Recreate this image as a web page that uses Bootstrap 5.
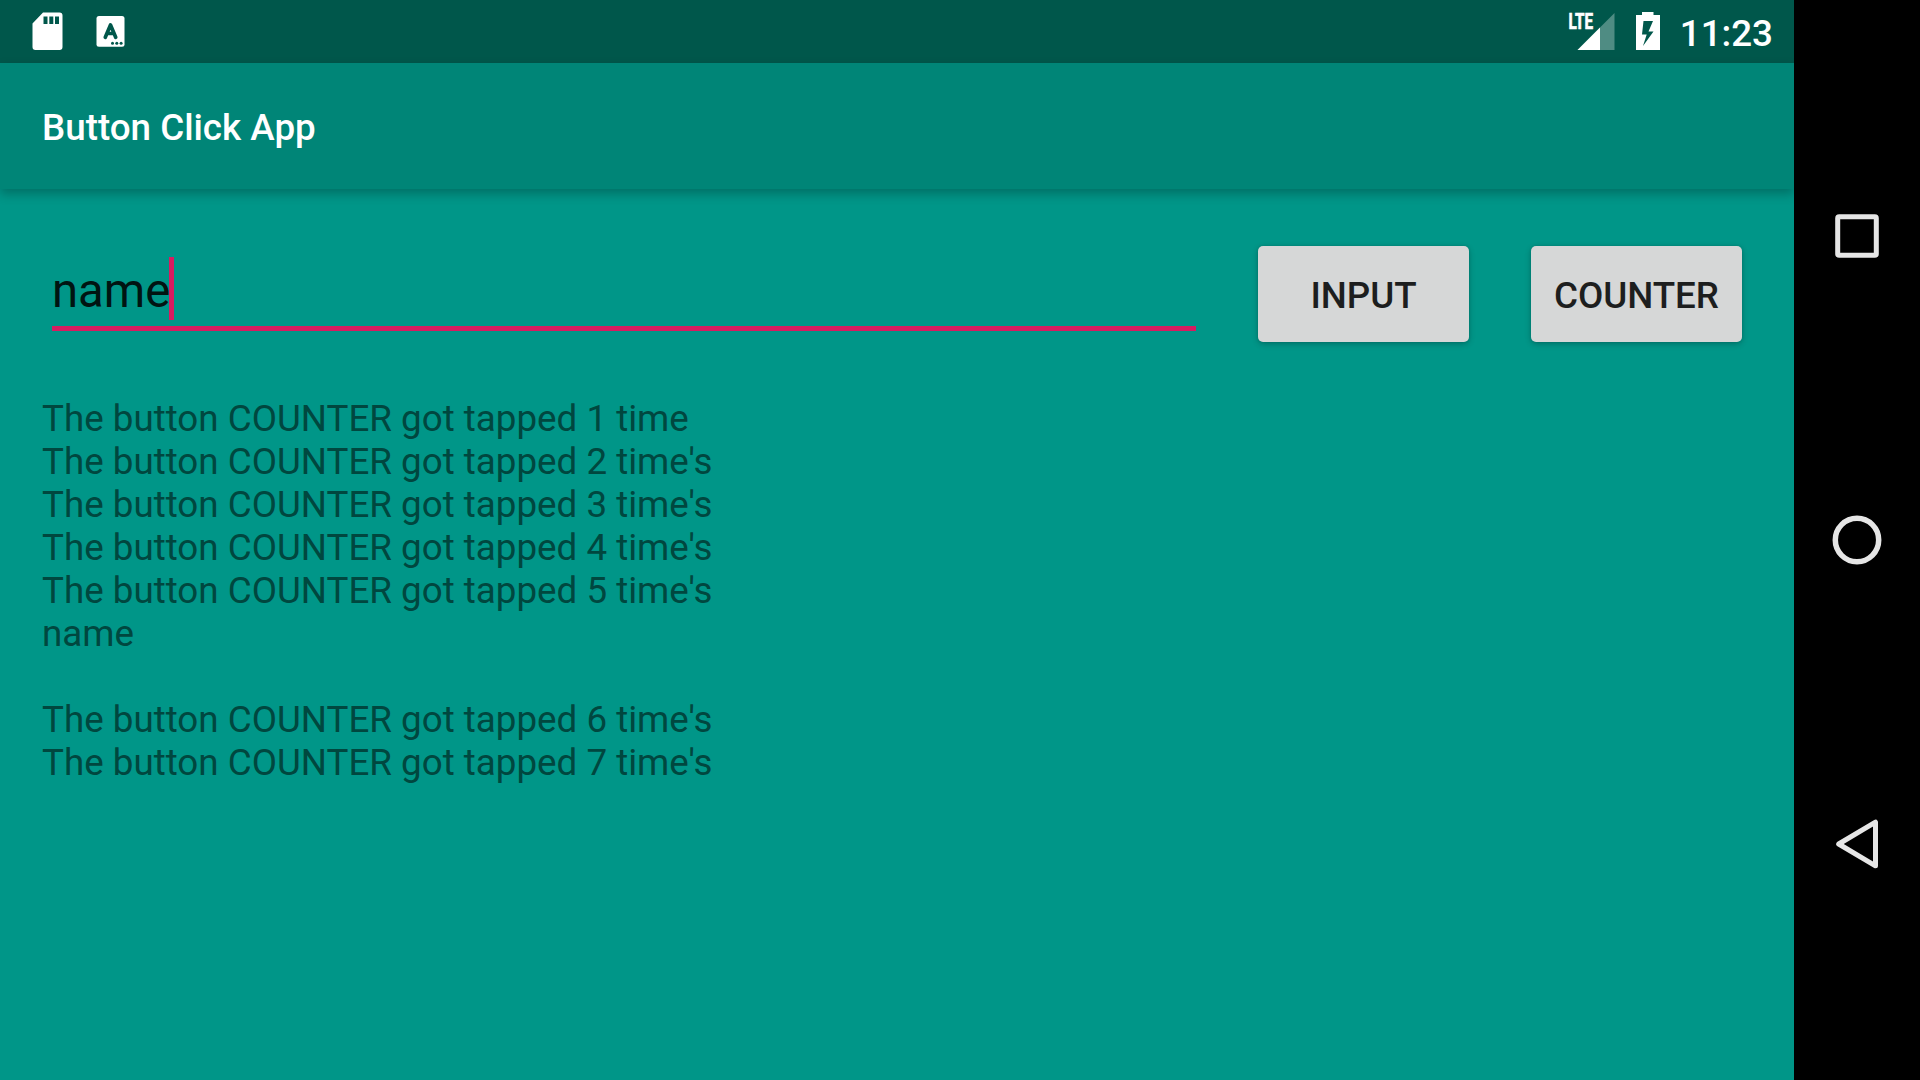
<!DOCTYPE html>
<html lang="en">
<head>
<meta charset="utf-8">
<meta name="viewport" content="width=device-width, initial-scale=1">
<title>Button Click App</title>
<link href="https://cdn.jsdelivr.net/npm/bootstrap@5.3.0/dist/css/bootstrap.min.css" rel="stylesheet">
<style>
body { font-family: Roboto, "Liberation Sans", sans-serif; font-size: 36.75px; line-height: 43px; background: #009688; }
.status-strip { height: 63px; background: #00574b; color: #fff; padding: 0 21px 0 32px; }
.clock { margin-left: 19px; line-height: 63px; padding-top: 2px; height: 63px; font-weight: 500; }
.app-bar { height: 126px; background: #008577; color: #fff; padding: 2px 42px 0; box-shadow: 0 5px 10px rgba(0,0,0,.25); z-index: 1; }
.app-title { font-size: inherit; font-weight: 500; line-height: 43px; }
.entry-row { padding: 57px 52px 0; }
.entry-field { width: 1144px; height: 85px; padding-top: 11px; border-bottom: 5px solid #d81b60; color: #001412; font-size: 47.25px; line-height: 69px; }
.caret { width: 5px; height: 63px; margin-left: -1px; background: #d81b60; }
.button-pair { gap: 62px; }
.app-btn { --bs-btn-font-size: 36.75px; --bs-btn-font-weight: 500; --bs-btn-color: #1d1e1e; --bs-btn-bg: #d6d7d7; --bs-btn-hover-bg: #cacbcb; --bs-btn-hover-color: #1d1e1e; --bs-btn-border-width: 0; --bs-btn-border-radius: 5px; --bs-btn-padding-x: 0; width: 211px; height: 96px; padding-top: 9px; line-height: 55px; letter-spacing: -.05px; box-shadow: 0 2px 6px rgba(0,0,0,.24), 0 0 3px rgba(0,0,0,.1); }
.log-list { padding: 55px 42px 0; color: #00473f; }
.log-list > div { min-height: 43px; }
.nav-strip { width: 126px; z-index: 3; }
svg { display: block; flex: none; }
</style>
<script src="https://cdn.jsdelivr.net/npm/bootstrap@5.3.0/dist/js/bootstrap.bundle.min.js"></script>
</head>
<body>
<div class="d-flex vh-100 overflow-hidden">
  <main class="flex-grow-1 d-flex flex-column">
    <div class="status-strip d-flex">
      <svg width="100" height="63" viewBox="32 0 100 63">
        <path fill="#fff" fill-rule="evenodd" d="M43 12.5h16.5a3 3 0 0 1 3 3V47a3 3 0 0 1-3 3h-24a3 3 0 0 1-3-3V23.5ZM43.500 16.500v7.500h4v-7.500Zm5.800 0v7.500h4v-7.500Zm5.700 0v7.500h4v-7.500Z"/>
        <rect x="96.500" y="16" width="28" height="30.700" rx="2.500" fill="#fff"/>
        <path d="M105.300 37.300L110.500 25L115.700 37.300M107.500 33.500h6" fill="none" stroke="#00574b" stroke-width="3.700" stroke-linecap="round" stroke-linejoin="round"/>
        <g fill="#00574b"><circle cx="112.500" cy="43.300" r="1.500"/><circle cx="116.800" cy="43.300" r="1.500"/><circle cx="121.100" cy="43.300" r="1.500"/></g>
      </svg>
      <svg class="ms-auto" width="95" height="63" viewBox="1566 0 95 63">
        <text x="1568.500" y="28.700" font-family="Roboto, sans-serif" font-size="21.500" font-weight="700" fill="#fff" stroke="#fff" stroke-width=".7" textLength="24.500" lengthAdjust="spacingAndGlyphs">LTE</text>
        <path d="M1614.500 13V50H1577.500L1600 27.500Z" fill="#4f8c83"/>
        <path d="M1600 27.500V50H1577.500Z" fill="#fff"/>
        <path fill="#fff" fill-rule="evenodd" d="M1636 15h6v-3h11.500v3h6.500v35h-24ZM1643.500 21l-1.500 13.500h4.700l-3.700 11.500 10.500-14.500h-5l4.500-10.500Z"/>
      </svg>
      <span class="clock">11:23</span>
    </div>
    <header class="app-bar d-flex align-items-center position-relative">
      <h1 class="app-title m-0">Button Click App</h1>
    </header>
    <section class="entry-row d-flex">
      <div class="entry-field d-flex"><span>name</span><span class="caret"></span></div>
      <div class="button-pair d-flex ms-auto">
        <button type="button" class="btn app-btn">INPUT</button>
        <button type="button" class="btn app-btn">COUNTER</button>
      </div>
    </section>
    <section class="log-list">
      <div>The button COUNTER got tapped 1 time</div>
      <div>The button COUNTER got tapped 2 time's</div>
      <div>The button COUNTER got tapped 3 time's</div>
      <div>The button COUNTER got tapped 4 time's</div>
      <div>The button COUNTER got tapped 5 time's</div>
      <div>name</div>
      <div></div>
      <div>The button COUNTER got tapped 6 time's</div>
      <div>The button COUNTER got tapped 7 time's</div>
    </section>
  </main>
  <nav class="nav-strip bg-black flex-shrink-0 position-relative">
    <svg width="126" height="1080" viewBox="1794 0 126 1080" fill="none" stroke="#e6e6e6" stroke-width="5" stroke-linejoin="round">
      <rect x="1837.700" y="216.700" width="38.600" height="38.600" rx="1.500"/>
      <circle cx="1857" cy="540" r="21.700" stroke-width="5.500"/>
      <path d="M1838.700 844L1875.500 822.200V865.800Z"/>
    </svg>
  </nav>
</div>
</body>
</html>
